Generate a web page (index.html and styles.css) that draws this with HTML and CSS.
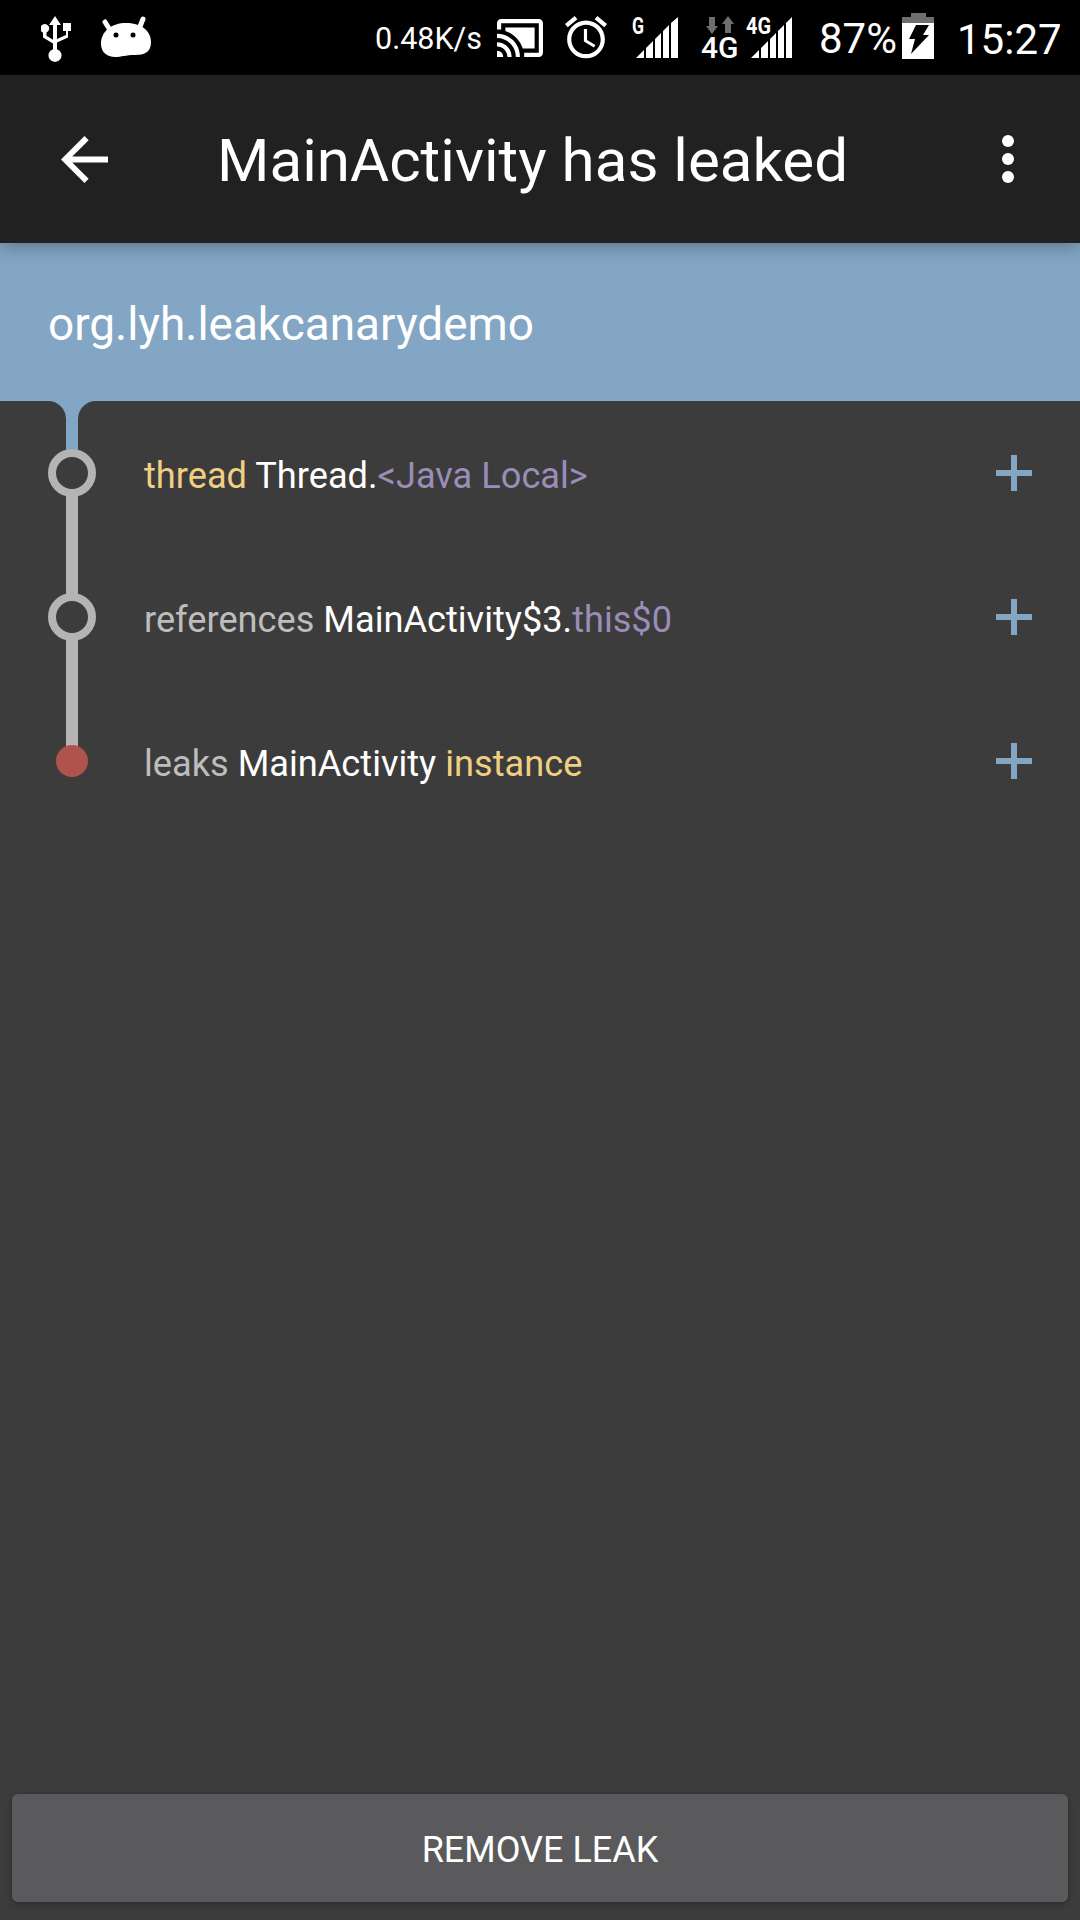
FILE: index.html
```html
<!DOCTYPE html>
<html lang="en">
<head>
<meta charset="utf-8">
<title>MainActivity has leaked</title>
<link rel="stylesheet" href="styles.css">
</head>
<body>
<div class="screen">
  <header class="status">
    <svg class="ic usb" viewBox="41 0 30 75"><path class="w" d="M55 16l6 9h-4v14l9-4v-4h-3v-8h8v8h-3v6.500l-11 5v6.700a6.500 6.500 0 1 1-4 0v-5.700l-10-6v-4.900a4.500 4.500 0 1 1 3.500 0v3.100l6.500 4V25h-4z"/></svg>
    <svg class="ic droid" viewBox="101 0 50 75"><path class="w" d="M126 23C140 23 151 30 151 42C151 52 145 55 135 55C125 55 122 57 115 57C107 57 101 52 101 44C101 31 112 23 126 23Z"/><path class="ear" d="M105 22L110 30M143 19L139 29"/><circle class="k" cx="116" cy="35" r="2.500"/><circle class="k" cx="133" cy="35" r="2.500"/></svg>
    <span class="speed">0.48K/s</span>
    <svg class="ic cast" viewBox="0 0 46 75"><g transform="translate(0 19) scale(2.090 2.110) translate(-1 -3)"><path class="w" d="M19 7H5v1.630c3.960 1.280 7.090 4.410 8.370 8.370H19V7zM1 18v3h3c0-1.660-1.340-3-3-3zm0-4v2c2.760 0 5 2.240 5 5h2c0-3.870-3.130-7-7-7zm0-4v2c4.970 0 9 4.030 9 9h2c0-6.080-4.930-11-11-11zm20-7H3c-1.100 0-2 .9-2 2v3h2V5h18v14h-7v2h7c1.100 0 2-.9 2-2V5c0-1.100-.9-2-2-2z"/></g></svg>
    <svg class="ic alarm" viewBox="0 0 42 75"><g transform="translate(0 16) scale(2.100) translate(-2 -1.860)"><path class="w" d="M22 5.720l-4.600-3.860-1.290 1.530 4.600 3.860L22 5.720zM7.880 3.390L6.600 1.860 2 5.710l1.290 1.530 4.590-3.850zM12.500 8H11v6l4.750 2.850.75-1.230-4-2.370V8zM12 4c-4.970 0-9 4.030-9 9s4.030 9 9 9c4.970 0 9-4.030 9-9s-4.030-9-9-9zm0 16c-3.870 0-7-3.130-7-7s3.130-7 7-7 7 3.130 7 7-3.130 7-7 7z"/></g></svg>
    <svg class="ic sig-g" viewBox="633 0 46 75"><text class="mini" x="633" y="34" textLength="12" lengthAdjust="spacingAndGlyphs">G</text><path class="w" d="M637 58l8-8v8zM647 48l7-7v17h-7zM656 39l6-6v25h-6zM664 31l6-6v33h-6zM672 23l7-6v41h-7z"/></svg>
    <svg class="ic net" viewBox="702 0 42 75"><path class="g" d="M710 17h6v9h3l-6 8-6-8h3zM726 33h6v-9h3l-6-8-6 8h3z"/><text class="net-t" x="702" y="58">4G</text></svg>
    <svg class="ic sig-4g" viewBox="746 0 48 75"><text class="mini" x="747" y="34" textLength="25" lengthAdjust="spacingAndGlyphs">4G</text><path class="w" d="M752 58l8-8v8zM762 48l7-7v17h-7zM771 39l6-6v25h-6zM779 31l6-6v33h-6zM787 23l6-6v41h-6z"/></svg>
    <span class="pct">87%</span>
    <svg class="ic batt" viewBox="903 0 32 75"><path class="g" d="M912 13h15v4h8v6h-32v-6h9z"/><path class="w" d="M903 23h32v36h-32z"/><path class="k" d="M917 25h13l-6 10h6l-18 19 4-15h-6z"/></svg>
    <span class="time">15:27</span>
  </header>

  <div class="toolbar">
    <svg class="back" viewBox="4 4 16 16"><path class="w" d="M20 11H7.830l5.590-5.590L12 4l-8 8 8 8 1.410-1.410L7.830 13H20v-2z"/></svg>
    <h1 class="title">MainActivity has leaked</h1>
    <div class="more"><i></i><i></i><i></i></div>
  </div>

  <div class="package">org.lyh.leakcanarydemo</div>

  <main class="trace">
    <div class="row">
      <svg class="node" viewBox="0 0 144 144"><path class="blue" d="M48 0A18 18 0 0 1 66 18V52H78V18A18 18 0 0 1 96 0Z"/><path class="line" d="M66 92H78V144H66Z"/><circle class="ring" cx="72" cy="72" r="20"/></svg>
      <p class="ref"><span class="yellow">thread</span> <span class="white">Thread.</span><span class="purple">&lt;Java Local&gt;</span></p>
      <svg class="plus" viewBox="0 0 36 36"><path class="blue" d="M15 0h6v15h15v6H21v15h-6V21H0v-6h15z"/></svg>
    </div>
    <div class="row">
      <svg class="node" viewBox="0 0 144 144"><path class="line" d="M66 0H78V52H66ZM66 92H78V144H66Z"/><circle class="ring" cx="72" cy="72" r="20"/></svg>
      <p class="ref"><span class="grey">references</span> <span class="white">MainActivity$3.</span><span class="purple">this$0</span></p>
      <svg class="plus" viewBox="0 0 36 36"><path class="blue" d="M15 0h6v15h15v6H21v15h-6V21H0v-6h15z"/></svg>
    </div>
    <div class="row">
      <svg class="node" viewBox="0 0 144 144"><path class="line" d="M66 0H78V72H66Z"/><circle class="red" cx="72" cy="72" r="16"/></svg>
      <p class="ref"><span class="grey">leaks</span> <span class="white">MainActivity</span> <span class="yellow">instance</span></p>
      <svg class="plus" viewBox="0 0 36 36"><path class="blue" d="M15 0h6v15h15v6H21v15h-6V21H0v-6h15z"/></svg>
    </div>
  </main>

  <button class="remove">REMOVE LEAK</button>
</div>
</body>
</html>
```

FILE: styles.css
```css
* { box-sizing: border-box; }
html, body { margin: 0; padding: 0; background: #3c3c3c; }
body { font-family: Roboto, "Liberation Sans", sans-serif; }
.screen { width: 1080px; height: 1920px; display: flex; flex-direction: column; overflow: hidden; background: #3c3c3c; }

.status { height: 75px; background: #000; display: flex; align-items: center; color: #fff; flex: none; padding-left: 41px; }
.ic { height: 75px; display: block; flex: none; }
.w { fill: #fff; }
.k { fill: #000; }
.g { fill: #6e6e6e; }
.ear { stroke: #fff; stroke-width: 5; stroke-linecap: round; fill: none; }
.mini { font: 700 24px Roboto, sans-serif; fill: #fff; }
.net-t { font: 500 30px Roboto, sans-serif; fill: #fff; }
.usb { width: 30px; }
.droid { width: 50px; margin-left: 30px; }
.speed { font-size: 30.500px; margin: 2px 0 0 224px; width: 107px; white-space: nowrap; }
.cast { width: 46px; margin-left: 15px; }
.alarm { width: 42px; margin-left: 22px; }
.sig-g { width: 46px; margin-left: 25px; }
.net { width: 42px; margin-left: 23px; }
.sig-4g { width: 48px; margin-left: 2px; }
.pct { font-size: 42px; margin: 2px 0 0 26px; width: 83px; white-space: nowrap; }
.batt { width: 32px; }
.time { font-size: 42px; margin: 3px 0 0 23px; white-space: nowrap; }

.toolbar { height: 168px; flex: none; background: #212121; display: flex; align-items: center; padding-left: 61px; color: #fff; position: relative; z-index: 2; box-shadow: 0 3px 18px rgba(0, 0, 0, .32); }
.back { width: 47px; height: 47px; flex: none; }
.title { margin: 4px 0 0 109px; font-size: 60.100px; font-weight: 400; line-height: 1; white-space: nowrap; flex: 1; }
.more { display: flex; flex-direction: column; gap: 6px; margin-right: 66px; flex: none; }
.more i { display: block; width: 12px; height: 12px; border-radius: 50%; background: #fff; }

.package { height: 158px; flex: none; background: #83a6c4; color: #fff; font-size: 45.900px; line-height: 162px; padding-left: 48px; white-space: nowrap; }

.trace { flex: 1; min-height: 0; display: flex; flex-direction: column; }
.row { height: 144px; flex: none; display: flex; align-items: center; padding-right: 48px; }
.node { width: 144px; height: 144px; display: block; flex: none; }
.ref { margin: 0; padding-top: 5px; flex: 1; font-size: 36.200px; line-height: 1.2; white-space: nowrap; }
.plus { width: 36px; height: 36px; display: block; flex: none; }
.blue { fill: #83a6c4; }
.line { fill: #b4b4b4; }
.ring { fill: none; stroke: #b4b4b4; stroke-width: 8; }
.red { fill: #b0534c; }
.yellow { color: #f0cf83; }
.white { color: #fff; }
.purple { color: #9a8db8; }
.grey { color: #bdbdbd; }

.remove { flex: none; height: 108px; margin: 0 12px 18px; border: 0; border-radius: 6px; background: #5a5a5c; color: #fff; font: 400 36px Roboto, sans-serif; box-shadow: 0 2px 6px rgba(0, 0, 0, .28); padding: 3px 0 0; }
```
